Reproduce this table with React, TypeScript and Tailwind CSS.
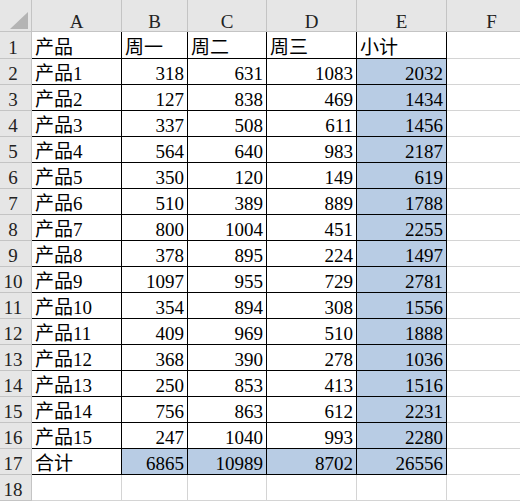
const COLS = ['A', 'B', 'C', 'D', 'E', 'F']

const ROWS: (string | number)[][] = [
  ['产品', '周一', '周二', '周三', '小计'],
  ['产品1', 318, 631, 1083, 2032],
  ['产品2', 127, 838, 469, 1434],
  ['产品3', 337, 508, 611, 1456],
  ['产品4', 564, 640, 983, 2187],
  ['产品5', 350, 120, 149, 619],
  ['产品6', 510, 389, 889, 1788],
  ['产品7', 800, 1004, 451, 2255],
  ['产品8', 378, 895, 224, 1497],
  ['产品9', 1097, 955, 729, 2781],
  ['产品10', 354, 894, 308, 1556],
  ['产品11', 409, 969, 510, 1888],
  ['产品12', 368, 390, 278, 1036],
  ['产品13', 250, 853, 413, 1516],
  ['产品14', 756, 863, 612, 2231],
  ['产品15', 247, 1040, 993, 2280],
  ['合计', 6865, 10989, 8702, 26556],
]

const font = "font-['Liberation_Serif','Noto_Sans_CJK_SC',serif] text-[19px] leading-[19px]"

// 表格区域：A1:E17 黑框，E2:E16 和 B17:E17 蓝色底
function isFilled(r: number, c: number) {
  if (c === 4 && r >= 1) return true
  if (r === 16 && c >= 1) return true
  return false
}

export default function App() {
  const total = ROWS.length + 1

  return (
    <div className={`h-[502px] w-[520px] overflow-hidden bg-white text-black ${font}`}>
      <div className="grid w-[537px] grid-cols-[32px_90px_66px_79px_90px_90px_90px]">
        {/* 左上角 */}
        <div className="relative h-[32px] border-r border-b border-[#c4c4c4] bg-[#e6e6e6]">
          <svg className="absolute top-[12px] left-[10px]" width="18" height="17" viewBox="0 0 18 17">
            <polygon points="18,0 18,17 0,17" fill="#b4b4b4" />
          </svg>
        </div>
        {COLS.map((c) => (
          <div
            key={c}
            className="flex h-[32px] items-end justify-center border-r border-b border-[#c4c4c4] bg-[#e6e6e6] text-[#222]"
          >
            <span>{c}</span>
          </div>
        ))}

        {Array.from({ length: total }, (_, r) => {
          const row = ROWS[r]
          const h = r === 0 ? 'h-[27px]' : 'h-[26px]'
          return [
            <div
              key={`h${r}`}
              className={`flex ${h} items-end justify-center border-r border-b border-[#c4c4c4] bg-[#e6e6e6] pr-[5px] pb-[1px] text-[#222]`}
            >
              <span>{r + 1}</span>
            </div>,
            ...Array.from({ length: 6 }, (_, c) => {
              const inTable = row && c < 5
              const v = inTable ? row[c] : ''
              const num = typeof v === 'number'
              return (
                <div
                  key={`${r}-${c}`}
                  className={`flex ${h} items-end border-r border-b pb-[1px] ${
                    inTable ? 'border-black' : 'border-[#d4d4d4]'
                  } ${inTable && isFilled(r, c) ? 'bg-[#b8cce4]' : ''} ${
                    num ? 'justify-end pr-[3px]' : 'pl-[3px]'
                  } whitespace-nowrap`}
                >
                  <span>{v}</span>
                </div>
              )
            }),
          ]
        })}
      </div>
    </div>
  )
}
